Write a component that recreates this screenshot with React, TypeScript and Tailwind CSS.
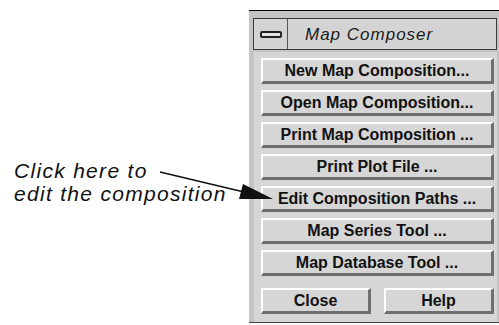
const actions = [
  "New Map Composition...",
  "Open Map Composition...",
  "Print Map Composition ...",
  "Print Plot File ...",
  "Edit Composition Paths ...",
  "Map Series Tool ...",
  "Map Database Tool ...",
];

const MotifButton = ({ label, className = "" }: { label: string; className?: string }) => (
  <button
    className={`flex h-[26px] items-center justify-center border-t-2 border-l-2 border-b-[3px] border-r-[3px] border-t-white border-l-white border-b-[#6f6f6f] border-r-[#6f6f6f] bg-[#d6d6d6] text-[16px] font-bold text-[#111] ${className}`}
  >
    {label}
  </button>
);

export default function App() {
  return (
    <div className="relative h-[325px] w-[499px] overflow-hidden bg-white font-['Liberation_Sans',Arial,sans-serif]">
      <div className="flex h-full">
        <div className="w-[249px] pl-[14px] pt-[159px] text-[21px] italic leading-[23px] tracking-[1.3px] text-[#111]">
          Click here to
          <br />
          edit the composition
        </div>

        <div className="mt-[10px] flex h-[313px] flex-1 flex-col border-t border-b border-t-black border-b-[#444] bg-[#c4c4c4] pl-[5px] pr-[2px] pt-[7px]">
          <div className="-ml-[1px] flex h-[32px] border border-[#3a3a3a] bg-[#d4d4d4]">
            <div className="flex w-[34px] items-center justify-center border-r border-r-[#555]">
              <div className="h-[7px] w-[22px] rounded-[2px] border-2 border-[#222] bg-[#e4e4e4]" />
            </div>
            <div className="pl-[17px] pt-[3px] text-[17px] italic tracking-[1px] text-[#1a1a1a]">
              Map Composer
            </div>
          </div>

          <div className="mt-[2px] flex flex-1 flex-col bg-[#d6d6d6] pl-[7px] pr-[3px] pt-[6px]">
            <div className="flex flex-col gap-[6px]">
              {actions.map((a) => (
                <MotifButton key={a} label={a} />
              ))}
            </div>
            <div className="mt-[12px] flex justify-between">
              <MotifButton label="Close" className="w-[110px]" />
              <MotifButton label="Help" className="w-[110px]" />
            </div>
          </div>
        </div>
      </div>

      <svg className="pointer-events-none absolute left-0 top-0" width="499" height="325">
        <line x1="160" y1="172" x2="244" y2="192" stroke="#111" strokeWidth="1.5" />
        <polygon points="273,199 239,199 243,184" fill="#111" />
      </svg>
    </div>
  );
}
